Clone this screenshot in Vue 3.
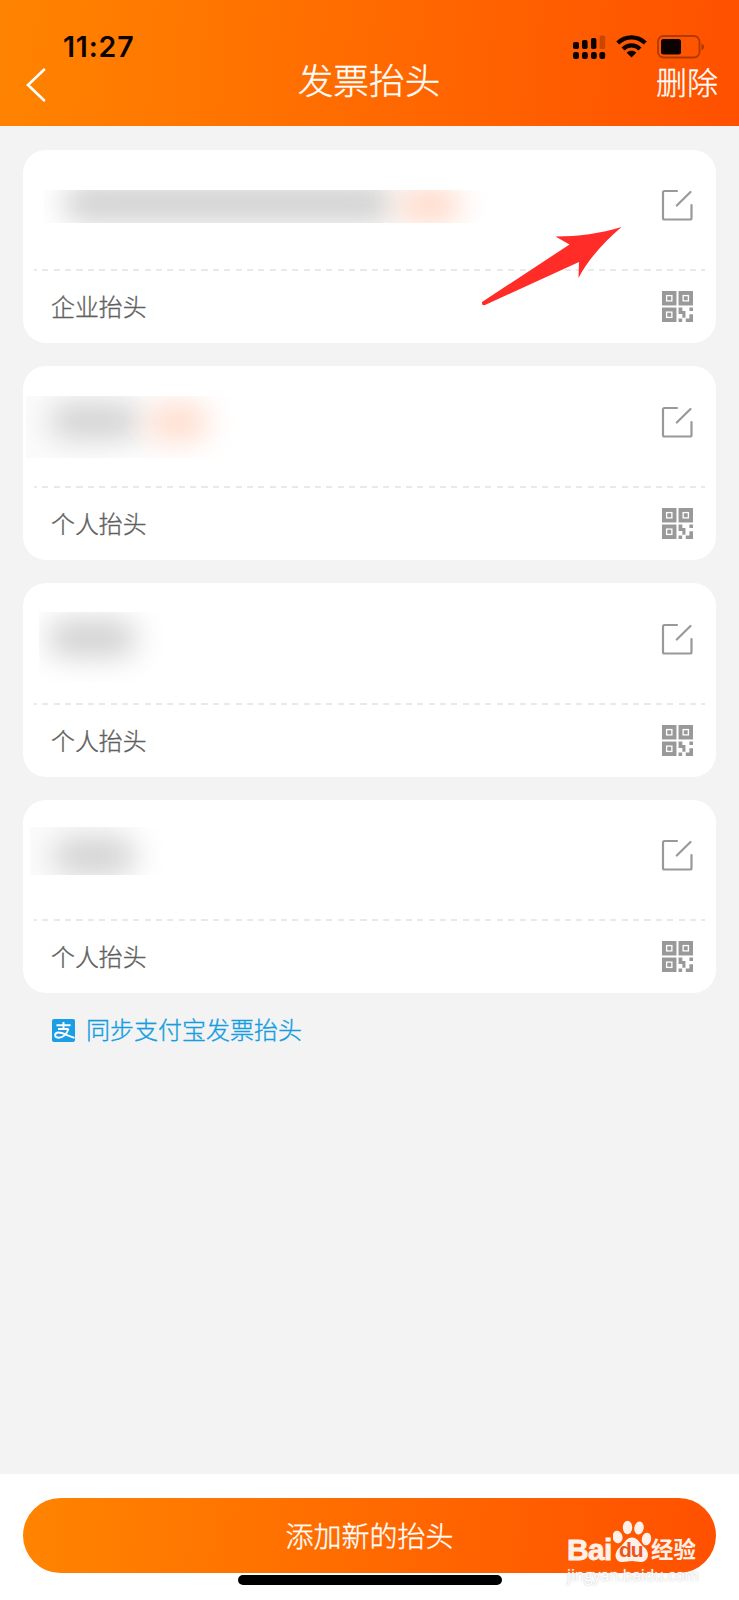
<!-- views/InvoiceTitles.vue -->
<template>
  <div class="page">
    <header class="header">
      <div class="status-bar">
        <span class="status-time">11:27</span>
        <div class="status-icons">
          <!-- dual sim signal -->
          <svg class="icon-signal" width="33" height="25" viewBox="0 0 33 25">
            <rect x="0" y="7" width="6" height="7" rx="1.8" />
            <rect x="9" y="5" width="5.6" height="9" rx="1.8" />
            <rect x="18" y="3" width="5.4" height="11" rx="1.8" />
            <rect x="26.6" y="0.5" width="5.6" height="13.5" rx="1.5" opacity="0.22" />
            <rect x="0" y="17" width="6" height="7" rx="2.2" />
            <rect x="9" y="17" width="5.8" height="7" rx="2.2" />
            <rect x="18" y="17" width="5.8" height="7" rx="2.2" />
            <rect x="26.4" y="17" width="5.8" height="7" rx="2.2" />
          </svg>
          <!-- wifi -->
          <svg class="icon-wifi" width="31" height="23" viewBox="0 0 31 23">
            <g fill="none" stroke="#0c0200" stroke-width="4.2">
              <path d="M1.7 8.1C9.5 0.4 21.5 0.4 29.3 8.1" />
              <path d="M7 14C12 9.1 19 9.1 24 14" />
            </g>
            <path d="M15.5 22.5L10.7 17.8C13.4 15.2 17.6 15.2 20.3 17.8Z" />
          </svg>
          <!-- battery -->
          <svg class="icon-battery" width="48" height="24" viewBox="0 0 48 24">
            <rect x="1" y="1" width="41.5" height="21.5" rx="5.5" fill="none" stroke="#b03a00" stroke-width="1.8" />
            <rect x="4" y="4" width="20" height="15.5" rx="2.5" />
            <path d="M44.5 8.5C48 10 48 13.8 44.5 15.3Z" fill="#b03a00" />
          </svg>
        </div>
      </div>
      <nav class="nav">
        <a href="#" class="nav-back">
          <svg width="20" height="34" viewBox="0 0 20 34">
            <path d="M18 1.7L2 17L18 32.3" fill="none" stroke="#fff" stroke-width="2.6" stroke-linecap="round" />
          </svg>
        </a>
        <h1 class="nav-title">发票抬头</h1>
        <a href="#" class="nav-action">删除</a>
      </nav>
    </header>

    <main class="content">
      <ul class="card-list">
        <li v-for="item in titles" :key="item.id" class="card">
          <div class="card-top">
            <div :class="['mask', 'mask-' + item.id]">
              <i class="mask-name"></i>
              <i v-if="item.tagged" class="mask-tag"></i>
            </div>
            <svg class="icon-edit" width="32" height="32" viewBox="0 0 32 32">
              <g fill="none" stroke="#999" stroke-width="2.2" stroke-linecap="round" stroke-linejoin="round">
                <path d="M16 2H3.5Q2 2 2 3.5V29Q2 30.5 3.5 30.5H29Q30.5 30.5 30.5 29V16" />
                <path d="M15.8 16.5L29.5 3" />
              </g>
            </svg>
          </div>
          <div class="card-bottom">
            <span class="card-type">{{ item.type }}</span>
            <svg class="icon-qr" width="31" height="31" viewBox="0 0 30 30">
              <g fill="none" stroke="#999" stroke-width="3.8">
                <rect x="1.9" y="1.9" width="10.2" height="10.2" />
                <rect x="17.9" y="1.9" width="10.2" height="10.2" />
                <rect x="1.9" y="17.9" width="10.2" height="10.2" />
              </g>
              <path
                fill="#999"
                d="M5.1 5.1h3.8v3.8h-3.8zM21.1 5.1h3.8v3.8h-3.8zM5.1 21.1h3.8v3.8h-3.8zM16 16h3.7v3.3h3v6.5h-3v-3.5h-3.7zM26.5 16h3.5v3.3h-3.5zM16 26.5h3.5v3.5h-3.5zM23 26.5h3.5v-4h3.5v7.5h-7z"
              />
            </svg>
          </div>
        </li>
      </ul>

      <a href="#" class="sync">
        <svg width="23" height="23" viewBox="0 0 23 23">
          <rect width="23" height="23" rx="2" fill="#1a9fe6" />
          <g fill="none" stroke="#fff" stroke-width="1.9">
            <path d="M4.5 6.2H18.5M11.5 3V10M6 10H16.5" />
            <path d="M16.5 10C14.5 15.5 11 18.7 6.5 18.7C2 18.7 2 13.5 6.5 13.5C11 13.5 15.5 17 22.5 18.8" />
          </g>
        </svg>
        <span>同步支付宝发票抬头</span>
      </a>
    </main>

    <footer class="footer">
      <button class="add-btn">添加新的抬头</button>
      <div class="home-bar"></div>
    </footer>

    <!-- pointer to the edit button -->
    <svg class="arrow" width="144" height="82" viewBox="0 0 144 82">
      <path
        d="M141.5 2C121 8.5 98 11.5 75.5 11.5L89.5 19.5L2 77Q1.5 81 5 80L99 37L98.5 53C108 35 122 19 141.5 2Z"
        fill="#ff2c27"
      />
    </svg>

    <div class="watermark">
      <div class="wm-logo">
        <span class="wm-bai">Bai</span>
        <span class="wm-paw">
          <svg width="40" height="44" viewBox="0 0 40 44">
            <g fill="#fff0e9">
              <ellipse cx="4.5" cy="18" rx="5" ry="6.3" transform="rotate(-12 4.5 18)" />
              <ellipse cx="14.5" cy="8.5" rx="4.7" ry="6.7" />
              <ellipse cx="26" cy="9" rx="4.7" ry="6.5" transform="rotate(10 26 9)" />
              <ellipse cx="33.5" cy="20" rx="4.7" ry="6.3" transform="rotate(10 33.5 20)" />
              <path d="M19 18.5C25 18.5 26 24 31 28C38 34 35 43 28 43C24 43 22 42 19 42C16 42 13 43 9 43C2 43 0 34 7 28C12 24 13 18.5 19 18.5Z" />
            </g>
          </svg>
          <b class="wm-du">du</b>
        </span>
        <span class="wm-jingyan">经验</span>
      </div>
      <div class="wm-url">jingyan.baidu.com</div>
    </div>
  </div>
</template>

<script setup>
const titles = [
  { id: 1, type: '企业抬头', tagged: true },
  { id: 2, type: '个人抬头', tagged: true },
  { id: 3, type: '个人抬头' },
  { id: 4, type: '个人抬头' },
]
</script>

<style>
body {
  margin: 0;
  background: #f3f3f3;
}
</style>

<style scoped>
.page {
  position: relative;
  display: flex;
  flex-direction: column;
  width: 739px;
  height: 1600px;
  overflow: hidden;
  background: #f3f3f3;
  font-family: 'Liberation Sans', 'Noto Sans CJK SC', sans-serif;
  font-weight: 300;
}

a {
  text-decoration: none;
}

.nav-title,
.nav-action,
.card-type,
.sync span,
.add-btn {
  -webkit-text-stroke: 0.35px currentColor;
}

.header {
  height: 126px;
  background: linear-gradient(95deg, #ff8400 0%, #ff5000 100%);
}

.status-bar {
  display: flex;
  justify-content: space-between;
  height: 60px;
  padding: 0 34px 0 63px;
}

.status-time {
  margin-top: 30px;
  font-family: Inter, sans-serif;
  font-size: 28.5px;
  font-weight: 600;
  line-height: 34px;
  letter-spacing: 0.8px;
  color: #0c0200;
}

.status-icons {
  display: flex;
  margin-top: 35px;
  fill: #0c0200;
}

.icon-wifi {
  margin-left: 10px;
}

.icon-battery {
  margin-left: 10px;
}

.nav {
  display: grid;
  grid-template-columns: 1fr auto 1fr;
  align-items: center;
  height: 46px;
  padding: 0 21px 0 26px;
  color: #fff;
}

.nav-back {
  height: 34px;
  margin-top: 3px;
}

.nav-title {
  margin: 0 6px 2px 0;
  font-size: 35.7px;
  font-weight: 300;
  line-height: 44px;
}

.nav-action {
  justify-self: end;
  margin-top: -6px;
  font-size: 31px;
  color: #fff;
}

.content {
  flex: 1;
  padding: 23.6px 23px 0;
}

.card-list {
  display: grid;
  gap: 23.3px;
  margin: 0;
  padding: 0;
  list-style: none;
}

.card {
  height: 193.5px;
  border-radius: 23px;
  background: #fff;
}

.card-top {
  position: relative;
  display: flex;
  justify-content: flex-end;
  height: 119.4px;
}

.icon-edit {
  margin: 39.4px 23.4px 0 0;
}

.card-bottom {
  position: relative;
  display: flex;
  align-items: center;
  justify-content: space-between;
  height: 75px;
  padding: 0 23px 0 28px;
}

.card-bottom::before {
  content: '';
  position: absolute;
  top: 0;
  left: 11px;
  right: 11px;
  height: 2px;
  background: repeating-linear-gradient(90deg, #e9e9e9 0 3.1px, transparent 3.1px 8.4px, #e9e9e9 8.4px 11.36px);
}

.card-type {
  margin-bottom: 2px;
  font-size: 23.9px;
  color: #606060;
}

/* hidden names */
.mask {
  position: absolute;
  overflow: hidden;
}

.mask-name,
.mask-tag {
  position: absolute;
  border-radius: 16px;
  background: #cfcfcf;
  filter: blur(15px);
}

.mask-tag {
  background: #ffd9c8;
}

.mask-1 {
  left: 21px;
  top: 40px;
  width: 450px;
  height: 33px;
}

.mask-1 .mask-name {
  left: 20px;
  top: -6px;
  width: 330px;
  height: 38px;
}

.mask-1 .mask-tag {
  left: 354px;
  top: -4px;
  width: 62px;
  height: 38px;
}

.mask-2 {
  left: 3px;
  top: 30px;
  width: 214px;
  height: 62px;
  background: linear-gradient(90deg, #fbfbfb, #fff 90%);
}

.mask-2 .mask-name {
  left: 24px;
  top: 8px;
  width: 90px;
  height: 34px;
}

.mask-2 .mask-tag {
  left: 122px;
  top: 9px;
  width: 60px;
  height: 34px;
}

.mask-3 {
  left: 16px;
  top: 29px;
  width: 135px;
  height: 71px;
}

.mask-3 .mask-name {
  left: 9px;
  top: 8px;
  width: 88px;
  height: 36px;
}

.mask-4 {
  left: 7px;
  top: 27px;
  width: 140px;
  height: 48px;
  background: linear-gradient(90deg, #fbfbfb, #fff);
}

.mask-4 .mask-name {
  left: 24px;
  top: 11px;
  width: 80px;
  height: 36px;
}

.sync {
  display: flex;
  align-items: center;
  gap: 11px;
  margin: 19.5px 0 0 29px;
  font-size: 24px;
  line-height: 36px;
  color: #149de0;
}

.footer {
  display: flex;
  flex-direction: column;
  align-items: center;
  box-sizing: border-box;
  height: 126.5px;
  padding: 24px 23px 0;
  background: #fff;
}

.add-btn {
  width: 100%;
  height: 75px;
  padding: 0;
  border: 0;
  border-radius: 38px;
  background: linear-gradient(95deg, #ff8400 0%, #ff5000 100%);
  font-family: inherit;
  font-size: 28px;
  font-weight: 300;
  color: #fff;
}

.home-bar {
  flex: none;
  width: 264px;
  height: 10px;
  margin-top: 2.5px;
  border-radius: 5px;
  background: #000;
}

.arrow {
  position: absolute;
  left: 480px;
  top: 225px;
}

.watermark {
  position: absolute;
  left: 567px;
  top: 1520px;
  width: 132px;
  color: #fff0e9;
}

.wm-logo {
  display: flex;
  align-items: flex-end;
  height: 43px;
}

.wm-bai {
  width: 46px;
  font-size: 30px;
  font-weight: 700;
  line-height: 26px;
  letter-spacing: -0.7px;
  -webkit-text-stroke: 0.8px #fff0e9;
}

.wm-paw {
  position: relative;
  width: 38px;
  height: 44px;
}

.wm-du {
  position: absolute;
  left: 6px;
  top: 20px;
  font-size: 21px;
  font-weight: 700;
  line-height: 22px;
  letter-spacing: -1px;
  color: #e8561c;
}

.wm-jingyan {
  font-size: 22.5px;
  font-weight: 700;
  line-height: 24px;
}

.wm-url {
  margin-top: 2px;
  font-family: 'Open Sans', sans-serif;
  font-size: 15.5px;
  font-weight: 400;
  line-height: 20px;
  color: #fff;
  text-shadow: 0 0 2px #bbb;
  white-space: nowrap;
}
</style>
